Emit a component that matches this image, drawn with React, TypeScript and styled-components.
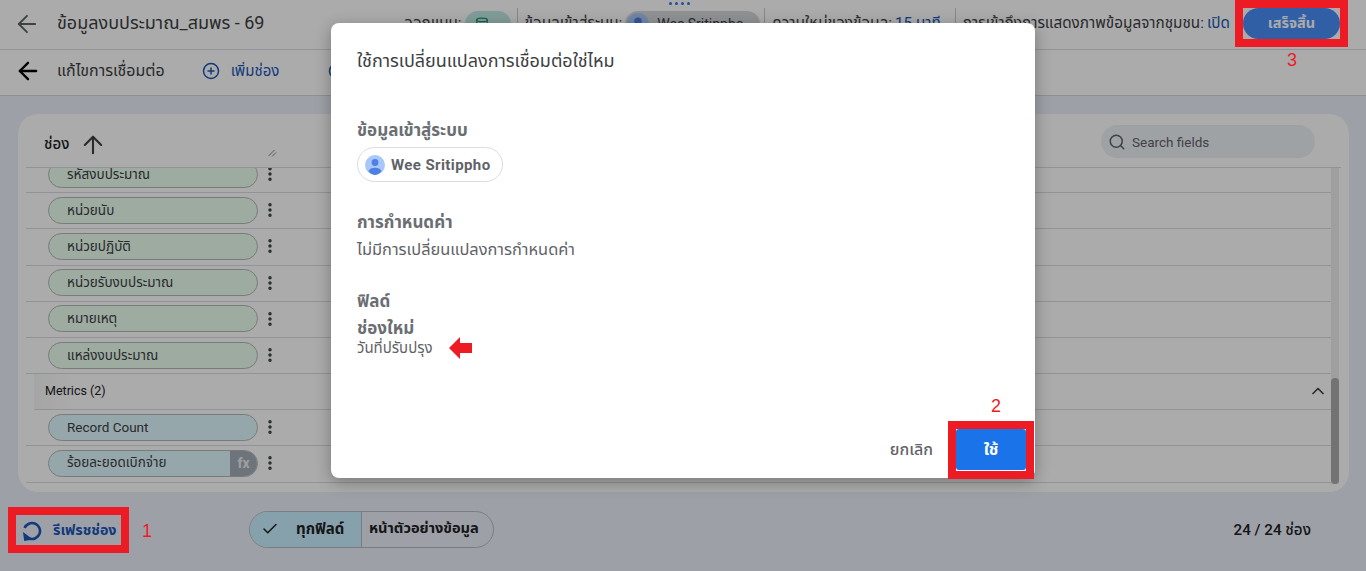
import React from "react";
import styled, { createGlobalStyle } from "styled-components";
import { ArrowLeft, ArrowUp, ChevronUp, Check, EllipsisVertical, PlusCircle, Search, Database } from "lucide-react";

const FONT = `Roboto, "Noto Sans Thai", "Noto Sans", "DejaVu Sans", sans-serif`;

const Global = createGlobalStyle`
  html, body { margin: 0; padding: 0; height: 100%; }
  body { font-family: ${FONT}; background: #eaeef8; overflow: hidden; }
  * { box-sizing: border-box; }
`;

const Page = styled.div`
  position: relative;
  width: 1366px;
  height: 571px;
  display: flex;
  flex-direction: column;
  overflow: hidden;
  background: #ebeff9;
`;

const TopBar = styled.header`
  height: 50px;
  flex: none;
  display: flex;
  align-items: center;
  padding: 0 26px 2px 13px;
  background: #fff;
  border-bottom: 1px solid #dadce0;
  color: #202124;
`;

const BackButton = styled.span<{ $dark?: boolean }>`
  display: flex;
  flex: none;
  width: 28px;
  color: ${(p) => (p.$dark ? "#000" : "#5f6368")};
`;

const DocTitle = styled.div`
  margin-left: 16px;
  font-size: 18px;
  color: #3c4043;
`;

const Meta = styled.div`
  margin-left: auto;
  display: flex;
  align-items: center;
  font-size: 15.3px;
  color: #3c4043;
`;

const MetaItem = styled.div<{ $end?: number }>`
  display: flex;
  align-items: center;
  gap: 3px;
  height: 32px;
  padding: 0 ${(p) => p.$end ?? 4}px 0 7px;
  border-left: 1px solid #c8c9cc;
  white-space: nowrap;
  &:first-child { border-left: 0; }
`;

const MetaLink = styled.span`
  color: #1a56b8;
`;

const MetaChip = styled.span`
  display: flex;
  align-items: center;
  gap: 8px;
  width: 135px;
  height: 26px;
  padding: 0 0 0 2px;
  border-radius: 13px;
  background: #d5d9dc;
  font-size: 14px;
`;

const ThemeChip = styled(MetaChip)`
  width: 46px;
  padding: 0 10px;
  background: #bfe9e4;
  color: #1e8e6e;
`;

const DoneButton = styled.button`
  width: 97px;
  height: 31px;
  margin-left: 12px;
  border: 0;
  border-radius: 16px;
  background: #4a8ef8;
  color: #fff;
  font: 700 14.5px ${FONT};
`;

const DragDots = styled.div`
  position: absolute;
  left: 669px;
  top: 2px;
  display: flex;
  gap: 3px;
  & > i { width: 3px; height: 3px; border-radius: 50%; background: #2f78e6; }
`;

const ToolBar = styled.div`
  height: 46px;
  flex: none;
  display: flex;
  align-items: center;
  padding: 0 16px 3px 14px;
  background: #fff;
  border-bottom: 1px solid #d3d5d9;
`;

const ToolTitle = styled.div`
  margin-left: 15px;
  font-size: 16px;
  color: #3c4043;
`;

const ToolAction = styled.div`
  display: flex;
  align-items: center;
  gap: 11px;
  margin-left: 37px;
  font-size: 15px;
  color: #1a56b8;
  & + & { margin-left: 49px; }
`;

const Main = styled.main`
  flex: 1;
  min-height: 0;
  display: flex;
  flex-direction: column;
  padding: 18px 17px 0 18px;
`;

const Panel = styled.section`
  height: 378px;
  flex: none;
  display: flex;
  flex-direction: column;
  padding: 0 10px 8px 8px;
  border-radius: 20px;
  background: #fff;
`;

const PanelHead = styled.div`
  height: 54px;
  flex: none;
  display: flex;
  align-items: center;
  padding: 8px 26px 0 18px;
  border-bottom: 1px solid #dadce0;
  margin-right: -2px;
`;

const HeadLabel = styled.div`
  font-size: 15px;
  font-weight: 500;
  color: #202124;
`;

const SortIcon = styled.span`
  display: flex;
  margin-left: 10px;
  color: #3c4043;
`;

const ResizeMark = styled.svg`
  margin: 17px 0 0 161px;
  color: #5f6368;
`;

const SearchBox = styled.div`
  margin: -6px 0 0 auto;
  width: 214px;
  height: 33px;
  display: flex;
  align-items: center;
  gap: 6px;
  padding: 0 7px;
  border-radius: 17px;
  background: #eef2f6;
  color: #5f6368;
  font-size: 13.5px;
`;

const ListArea = styled.div`
  flex: 1;
  min-height: 0;
  display: flex;
  overflow: hidden;
`;

const List = styled.div`
  flex: 1;
  min-width: 0;
  margin-top: -11px;
`;

const Row = styled.div`
  height: 36.2px;
  display: flex;
  align-items: center;
  gap: 3px;
  padding: 0 0 1px 22px;
  border-bottom: 1px solid #dadce0;
`;

const FieldPill = styled.div<{ $kind: "dim" | "metric" }>`
  width: 210px;
  height: 27px;
  display: flex;
  align-items: center;
  padding: ${(p) => (p.$kind === "dim" ? "1px" : "0")} 0 0 18px;
  border: 1px solid #b2b8b6;
  border-radius: 14px;
  overflow: hidden;
  background: ${(p) => (p.$kind === "dim" ? "#ebfff1" : "#e0faff")};
  font-size: 13.5px;
  color: #3c4043;
`;

const FxTag = styled.span`
  margin-left: auto;
  width: 27px;
  height: 100%;
  display: flex;
  align-items: center;
  justify-content: center;
  background: #a4aeb9;
  color: #eceff1;
  font-size: 14px;
  font-weight: 700;
`;

const Kebab = styled.span`
  display: flex;
  color: #3c4043;
`;

const GroupRow = styled.div`
  height: 36px;
  display: flex;
  align-items: center;
  justify-content: space-between;
  margin-left: 8px;
  padding: 0 3px 2px 11px;
  background: linear-gradient(90deg, #f6f7f8 0, #fff 40px);
  border-bottom: 1px solid #dadce0;
  font-size: 12.5px;
  font-weight: 400;
  color: #202124;
`;

const GroupChevron = styled.span`
  display: flex;
  color: #3c4043;
`;

const Track = styled.div`
  flex: none;
  width: 8px;
  display: flex;
  flex-direction: column;
  justify-content: flex-end;
  background: #ededed;
`;

const Thumb = styled.div`
  height: 106px;
  border-radius: 4px;
  background: #acacac;
`;

const Footer = styled.footer`
  flex: 1;
  display: flex;
  align-items: center;
  padding: 0 38px 2px 4px;
`;

const RefreshAction = styled.div`
  width: 227px;
  display: flex;
  align-items: center;
  gap: 11px;
  font-size: 14.3px;
  font-weight: 700;
  color: #1a56b8;
`;

const Toggle = styled.div`
  height: 37px;
  margin-top: -3px;
  display: flex;
  border: 1px solid #b7bac0;
  border-radius: 19px;
  overflow: hidden;
  font-weight: 700;
  color: #202124;
`;

const ToggleOn = styled.div`
  width: 112px;
  display: flex;
  align-items: center;
  gap: 17px;
  padding-left: 11px;
  background: #c8f0ff;
  border-right: 1px solid #b7bac0;
  font-size: 15px;
`;

const ToggleOff = styled.div`
  width: 131px;
  display: flex;
  align-items: center;
  padding-left: 7px;
  font-size: 14.6px;
  white-space: nowrap;
`;

const Count = styled.div`
  margin-left: auto;
  font-size: 15.2px;
  font-weight: 500;
  color: #202124;
`;

const Scrim = styled.div`
  position: absolute;
  inset: 0;
  background: rgba(0, 0, 0, 0.33);
`;

const Dialog = styled.div`
  position: absolute;
  left: 331px;
  top: 23px;
  width: 704px;
  height: 455px;
  display: flex;
  flex-direction: column;
  padding: 0 9px 8px 26px;
  border-radius: 8px;
  background: #fff;
  box-shadow: 0 4px 16px rgba(0, 0, 0, 0.3);
`;

const DialogTitle = styled.h2`
  margin: 26px 0 0;
  font-size: 18px;
  line-height: 24px;
  font-weight: 400;
  color: #3c4043;
`;

const SectionTitle = styled.div<{ $gap: number }>`
  margin-top: ${(p) => p.$gap}px;
  font-size: 17px;
  line-height: 20px;
  font-weight: 700;
  color: #6a6e73;
`;

const SectionText = styled.div<{ $gap: number; $size: number }>`
  margin-top: ${(p) => p.$gap}px;
  font-size: ${(p) => p.$size}px;
  line-height: 18px;
  color: #5f6368;
`;

const AccountChip = styled.div`
  align-self: flex-start;
  height: 35px;
  margin-top: 7px;
  display: flex;
  align-items: center;
  gap: 6px;
  padding: 0 11px 0 7px;
  border: 1px solid #dadce0;
  border-radius: 18px;
  font-size: 15px;
  letter-spacing: 0.4px;
  font-weight: 700;
  color: #5f6368;
`;

const DialogActions = styled.div`
  margin-top: auto;
  display: flex;
  align-items: center;
  justify-content: flex-end;
  gap: 23px;
`;

const CancelButton = styled.button`
  padding: 0;
  border: 0;
  background: none;
  color: #5f6368;
  font: 500 16px ${FONT};
`;

const ApplyButton = styled.button`
  width: 70px;
  height: 41px;
  border: 0;
  border-radius: 3px;
  background: #1a73e8;
  color: #fff;
  font: 700 16px ${FONT};
`;

const RedFrame = styled.div<{ $x: number; $y: number; $w: number; $h: number }>`
  position: absolute;
  left: ${(p) => p.$x}px;
  top: ${(p) => p.$y}px;
  width: ${(p) => p.$w}px;
  height: ${(p) => p.$h}px;
  border: 8px solid #ed1c24;
`;

const RedNumber = styled.div<{ $x: number; $y: number }>`
  position: absolute;
  left: ${(p) => p.$x}px;
  top: ${(p) => p.$y}px;
  font: 18px "Liberation Sans", sans-serif;
  color: #ed1c24;
`;

const RedArrow = styled.svg`
  position: absolute;
  left: 449px;
  top: 337px;
`;

const Avatar = ({ size = 20 }: { size?: number }) => (
  <svg width={size} height={size} viewBox="0 0 20 20">
    <circle cx="10" cy="10" r="10" fill="#a8c7fa" />
    <circle cx="10" cy="7.5" r="3.4" fill="#4f7fe0" />
    <path d="M3.4 16a7 5 0 0 1 13.2 0A9.6 9.6 0 0 1 10 20a9.6 9.6 0 0 1-6.6-4z" fill="#4f7fe0" />
  </svg>
);

const RefreshIcon = () => (
  <svg width="20" height="20" viewBox="0 0 20 20" fill="none" stroke="#1a56b8" strokeWidth="2.6">
    <path d="M2.6 7A8 8 0 1 1 7.4 17.6" />
    <path d="M1 11 L2.2 20 L11 18.4 Z" fill="#1a56b8" stroke="none" />
  </svg>
);

const dimensions = ["รหัสงบประมาณ", "หน่วยนับ", "หน่วยปฏิบัติ", "หน่วยรับงบประมาณ", "หมายเหตุ", "แหล่งงบประมาณ"];

const Field = ({ label, kind, fx }: { label: string; kind: "dim" | "metric"; fx?: boolean }) => (
  <Row>
    <FieldPill $kind={kind}>
      {label}
      {fx && <FxTag>fx</FxTag>}
    </FieldPill>
    <Kebab><EllipsisVertical size={18} strokeWidth={2.6} /></Kebab>
  </Row>
);

export default function App() {
  return (
    <Page>
      <Global />
      <TopBar>
        <BackButton><ArrowLeft size={28} strokeWidth={1.6} /></BackButton>
        <DocTitle>ข้อมูลงบประมาณ_สมพร - 69</DocTitle>
        <Meta>
          <MetaItem $end={6}>ออกแบบ: <ThemeChip><Database size={14} /></ThemeChip></MetaItem>
          <MetaItem>ข้อมูลเข้าสู่ระบบ: <MetaChip><Avatar size={22} />Wee Sritippho</MetaChip></MetaItem>
          <MetaItem $end={14}>ความใหม่ของข้อมูล: <MetaLink>15 นาที</MetaLink></MetaItem>
          <MetaItem $end={1}>การเข้าถึงการแสดงภาพข้อมูลจากชุมชน: <MetaLink>เปิด</MetaLink></MetaItem>
        </Meta>
        <DoneButton>เสร็จสิ้น</DoneButton>
      </TopBar>
      <DragDots><i /><i /><i /><i /></DragDots>
      <ToolBar>
        <BackButton $dark><ArrowLeft size={28} strokeWidth={2} /></BackButton>
        <ToolTitle>แก้ไขการเชื่อมต่อ</ToolTitle>
        <ToolAction><PlusCircle size={18} />เพิ่มช่อง</ToolAction>
        <ToolAction><PlusCircle size={18} /></ToolAction>
      </ToolBar>
      <Main>
        <Panel>
          <PanelHead>
            <HeadLabel>ช่อง</HeadLabel>
            <SortIcon><ArrowUp size={28} strokeWidth={1.8} /></SortIcon>
            <ResizeMark width="9" height="8" viewBox="0 0 9 8">
              <path d="M0.5 7 L6.5 1 M4 7.5 L8 3.5" stroke="currentColor" fill="none" strokeWidth="0.8" />
            </ResizeMark>
            <SearchBox><Search size={18} />Search fields</SearchBox>
          </PanelHead>
          <ListArea>
            <List>
              {dimensions.map((d) => <Field key={d} label={d} kind="dim" />)}
              <GroupRow>
                Metrics (2)
                <GroupChevron><ChevronUp size={20} strokeWidth={2} /></GroupChevron>
              </GroupRow>
              <Field label="Record Count" kind="metric" />
              <Field label="ร้อยละยอดเบิกจ่าย" kind="metric" fx />
            </List>
            <Track><Thumb /></Track>
          </ListArea>
        </Panel>
        <Footer>
          <RefreshAction><RefreshIcon />รีเฟรชช่อง</RefreshAction>
          <Toggle>
            <ToggleOn><Check size={18} />ทุกฟิลด์</ToggleOn>
            <ToggleOff>หน้าตัวอย่างข้อมูล</ToggleOff>
          </Toggle>
          <Count>24 / 24 ช่อง</Count>
        </Footer>
      </Main>
      <Scrim />
      <Dialog>
        <DialogTitle>ใช้การเปลี่ยนแปลงการเชื่อมต่อใช่ไหม</DialogTitle>
        <SectionTitle $gap={47}>ข้อมูลเข้าสู่ระบบ</SectionTitle>
        <AccountChip><Avatar />Wee Sritippho</AccountChip>
        <SectionTitle $gap={30}>การกำหนดค่า</SectionTitle>
        <SectionText $gap={9} $size={16.4}>ไม่มีการเปลี่ยนแปลงการกำหนดค่า</SectionText>
        <SectionTitle $gap={32}>ฟิลด์</SectionTitle>
        <SectionTitle $gap={7}>ช่องใหม่</SectionTitle>
        <SectionText $gap={1} $size={15}>วันที่ปรับปรุง</SectionText>
        <DialogActions>
          <CancelButton>ยกเลิก</CancelButton>
          <ApplyButton>ใช้</ApplyButton>
        </DialogActions>
      </Dialog>
      <RedFrame $x={1235} $y={0} $w={113} $h={47} />
      <RedFrame $x={948} $y={421} $w={86} $h={58} />
      <RedFrame $x={8} $y={507} $w={121} $h={46} />
      <RedNumber $x={142} $y={521}>1</RedNumber>
      <RedNumber $x={991} $y={396}>2</RedNumber>
      <RedNumber $x={1287} $y={50}>3</RedNumber>
      <RedArrow width="23" height="22" viewBox="0 0 23 22">
        <path d="M0 11 L11 0 V6 H23 V16 H11 V22 Z" fill="#ed1c24" />
      </RedArrow>
    </Page>
  );
}
